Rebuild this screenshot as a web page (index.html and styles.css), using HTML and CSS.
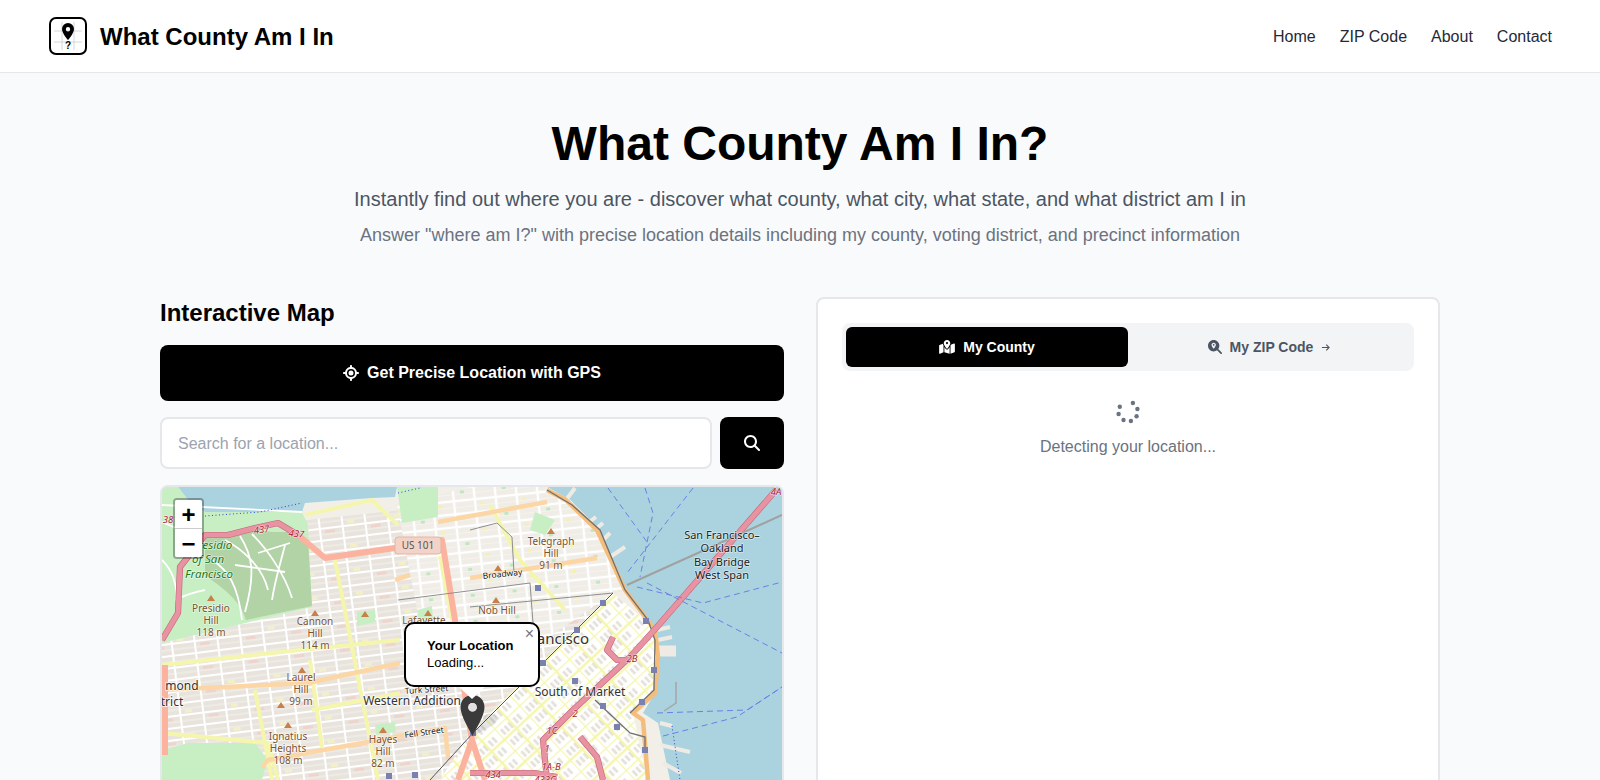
FILE: index.html
```html
<!DOCTYPE html>
<html lang="en">
<head>
    <meta charset="UTF-8">
    <meta name="viewport" content="width=device-width, initial-scale=1.0">
    <title>What County Am I In</title>
    <link rel="stylesheet" href="styles.css">
</head>
<body>
    <header class="site-header">
        <a class="brand" href="#">
            <svg class="brand-logo" viewBox="-1 0 40 40">
                <rect class="logo-frame" x="1" y="1" width="36" height="36" rx="6"/>
                <path class="logo-grid" d="M5 14H33M5 25H33M13 5V33M25 5V33"/>
                <path class="logo-pin" fill-rule="evenodd" d="M19 6a6 6 0 0 0-6 6c0 4.500 6 11 6 11s6-6.500 6-11A6 6 0 0 0 19 6zm0 4a2.200 2.200 0 1 1 0 4.400 2.200 2.200 0 0 1 0-4.400z"/>
                <text class="logo-mark" x="19" y="32">?</text>
            </svg>
            <span class="brand-name">What County Am I In</span>
        </a>
        <nav class="site-nav">
            <a href="#">Home</a>
            <a href="#">ZIP Code</a>
            <a href="#">About</a>
            <a href="#">Contact</a>
        </nav>
    </header>

    <main class="page">
        <section class="hero">
            <h1>What County Am I In?</h1>
            <p class="hero-lead">Instantly find out where you are - discover what county, what city, what state, and what district am I in</p>
            <p class="hero-sub">Answer "where am I?" with precise location details including my county, voting district, and precinct information</p>
        </section>

        <div class="columns">
            <section class="map-column">
                <h2>Interactive Map</h2>
                <button class="gps-button" type="button">
                    <svg class="icon-gps" viewBox="0 0 512 512"><path d="M256 0c17.700 0 32 14.300 32 32V66.700C368.400 80.100 431.900 143.600 445.300 224H480c17.700 0 32 14.300 32 32s-14.300 32-32 32H445.300C431.900 368.400 368.400 431.900 288 445.300V480c0 17.700-14.300 32-32 32s-32-14.300-32-32V445.300C143.600 431.900 80.100 368.400 66.700 288H32c-17.700 0-32-14.300-32-32s14.300-32 32-32H66.700C80.100 143.600 143.600 80.100 224 66.700V32c0-17.700 14.300-32 32-32zM128 256a128 128 0 1 0 256 0 128 128 0 1 0 -256 0zm128-80a80 80 0 1 1 0 160 80 80 0 1 1 0-160z"/></svg>
                    Get Precise Location with GPS
                </button>
                <form class="search-row">
                    <input class="search-input" type="text" placeholder="Search for a location...">
                    <button class="search-button" type="button" aria-label="Search">
                        <svg class="icon-search" viewBox="0 0 512 512"><path d="M416 208c0 45.900-14.900 88.300-40 122.700L502.600 457.400c12.500 12.500 12.500 32.800 0 45.300s-32.800 12.500-45.300 0L330.700 376c-34.400 25.200-76.800 40-122.700 40C93.100 416 0 322.900 0 208S93.100 0 208 0S416 93.100 416 208zM208 352a144 144 0 1 0 0-288 144 144 0 1 0 0 288z"/></svg>
                    </button>
                </form>

                <div class="map">
                    <svg class="map-canvas" viewBox="162 487 620 596">
                        <defs>
                            <pattern id="blocks" width="46" height="24" patternUnits="userSpaceOnUse" patternTransform="rotate(-7)">
                                <rect class="pt-street" width="46" height="24"/>
                                <rect class="pt-block" x="1" y="1" width="21" height="10"/>
                                <rect class="pt-block" x="24" y="1" width="21" height="10"/>
                                <rect class="pt-block" x="1" y="13" width="21" height="10"/>
                                <rect class="pt-block" x="24" y="13" width="21" height="10"/>
                                <path class="pt-alley" d="M1 6H22M24 6H45M1 18H22M24 18H45"/>
                                <rect class="pt-pink" x="28" y="14" width="10" height="3"/>
                                <rect class="pt-pale" x="5" y="7" width="7" height="3"/>
                            </pattern>
                            <pattern id="blocks-light" width="42" height="26" patternUnits="userSpaceOnUse" patternTransform="rotate(-6)">
                                <rect class="pt-street" width="42" height="26"/>
                                <rect class="pt-block-light" x="1.200" y="1.200" width="18.600" height="10.600"/>
                                <rect class="pt-block-light" x="22.200" y="1.200" width="18.600" height="10.600"/>
                                <rect class="pt-block-light" x="1.200" y="14.200" width="18.600" height="10.600"/>
                                <rect class="pt-block-light" x="22.200" y="14.200" width="18.600" height="10.600"/>
                                <path class="pt-alley" d="M1 6.500H20M22 6.500H41M1 19.500H20M22 19.500H41"/>
                                <rect class="pt-yolk" x="5" y="3" width="4" height="3"/>
                                <rect class="pt-green" x="28" y="16" width="4" height="3"/>
                            </pattern>
                            <pattern id="soma" width="34" height="30" patternUnits="userSpaceOnUse" patternTransform="rotate(-43)">
                                <rect class="pt-street" width="34" height="30"/>
                                <path class="pt-stripe" d="M5 5V12M10 5V12M15 5V12M22 5V12M27 5V12M5 19V26M10 19V26M15 19V26M22 19V26M27 19V26"/>
                                <path class="pt-yellow" d="M0 0H34M0 15H34M0 0V30M17 0V30"/>
                            </pattern>
                        </defs>

                        <rect class="water" x="162" y="487" width="620" height="596"/>

                        <path class="land" d="M162 487H178L188 500L205 512L302 512L305 503L372 498L395 497L397 487H547L570 500L597 527L627 590L657 630L658 657L655 693L643 713L658 723L670 780H162Z"/>
                        <path class="pier" d="M585 525L596 517M592 532L603 523M598 545L610 533M610 557L625 547M566 500L575 488M657 630L670 627M658 640L672 637M660 723L672 726M660 745L690 752M663 763L681 773"/>
                        <path class="pier-wide" d="M658 651H676"/>
                        <path class="marina" d="M676 682V703L664 711"/>

                        <path class="blocks" d="M162 535L450 505L470 487H547L570 500L597 527L627 590L613 593L470 733L440 780H162Z"/>
                        <path class="blocks-light" d="M397 505L470 487H547L570 500L597 527L627 590L613 593L545 640L420 625Z"/>
                        <path class="soma" d="M613 593L657 630L658 657L655 693L633 713L647 780H440L470 733Z"/>

                        <path class="park" d="M162 487H178L188 500L205 512L302 512L308 525L312 607L162 643Z"/>
                        <path class="forest" d="M205 538C225 530 250 528 272 532L298 532L308 540L312 606L246 620C240 600 225 590 205 575Z"/>
                        <path class="park-road" d="M225 540C240 548 262 565 268 590M240 536C252 555 256 572 245 612M252 534C268 550 285 575 292 598M212 560C228 570 238 585 242 620M285 545C280 565 275 580 272 600M162 522C180 530 195 535 205 540M162 505L302 512M175 600C185 595 195 592 205 590M162 560C172 570 178 585 176 600M258 553L290 543M235 565L285 572"/>
                        <path class="park" d="M162 750L188 743L255 743L268 760L262 780H162Z"/>
                        <path class="park" d="M397 487H438L438 517L402 523Z"/>
                        <path class="park" d="M535 512L555 520L545 535L530 530Z"/>
                        <path class="park" d="M357 612L375 610L375 622L357 626Z"/>
                        <path class="park" d="M417 610L432 606L433 618L419 622Z"/>
                        <path class="park" d="M375 725L395 722L396 732L376 735Z"/>
                        <path class="coast-dots" d="M205 516L260 512L302 503M398 493L420 488M672 726L680 780"/>

                        <path class="rd-tert" d="M335 560L378 780M440 556L452 620M162 733L268 743L278 780M162 665L300 650L400 640M255 690L272 780M310 660L322 747M312 710L400 693M305 515L372 500L398 525M490 505L520 560L565 610"/>
                        <path class="rd-sec" d="M162 690L308 683L400 663M262 767L268 760L445 728L448 757M438 522L547 502M395 580L410 575M470 578L597 558"/>
                        <path class="rd-trunk" d="M298 535L325 558L395 548L442 540L455 620L465 695L472 740L458 780M472 740L485 780M165 665V755"/>
                        <path class="rd-motor-edge" d="M162 640L178 613L180 567L205 535L228 535L255 528L278 523L298 535"/>
                        <path class="rd-motor" d="M162 640L178 613L180 567L205 535L228 535L255 528L278 523L298 535"/>
                        <path class="rd-embarc" d="M547 490L566 500L597 530L625 590L655 630L658 657L655 693L633 713L643 720L648 780"/>
                        <path class="rail" d="M547 490L572 505L600 530L625 590L648 620L655 640L654 690L630 713"/>
                        <path class="rd-motor-edge" d="M776 490L657 627L630 657L573 710L543 740L547 780M470 773H535L557 777M580 737L597 757L603 780M613 637L607 650L617 660L630 660"/>
                        <path class="rd-motor" d="M776 490L657 627L630 657L573 710L543 740L547 780M470 773H535L557 777M580 737L597 757L603 780M613 637L607 650L617 660L630 660"/>

                        <path class="rail rail-soft" d="M470 530L497 523L512 537L514 573M530 583L533 623M398 600L530 583M470 607L613 593"/>
                        <path class="rail" d="M595 700L630 733L645 737L645 750"/>
                        <path class="rail-thin" d="M613 593L473 733L430 780"/>
                        <path class="bridge-gray" d="M627 585L782 515"/>
                        <path class="ferry" d="M608 488L647 542M645 488L653 513L640 577M693 488L627 573M647 583L782 653M637 587L703 603L782 582M657 713L747 710L782 687M663 736L737 717L782 687"/>

                        <g class="stations">
                            <rect x="535" y="585" width="6" height="6"/>
                            <rect x="600" y="600" width="6" height="6"/>
                            <rect x="643" y="618" width="6" height="6"/>
                            <rect x="574" y="627" width="6" height="6"/>
                            <rect x="540" y="660" width="6" height="6"/>
                            <rect x="572" y="678" width="6" height="6"/>
                            <rect x="651" y="667" width="6" height="6"/>
                            <rect x="639" y="699" width="6" height="6"/>
                            <rect x="600" y="703" width="6" height="6"/>
                            <rect x="614" y="724" width="6" height="6"/>
                            <rect x="642" y="747" width="6" height="6"/>
                            <rect x="470" y="730" width="6" height="6"/>
                            <rect x="386" y="773" width="6" height="6"/>
                            <rect x="412" y="772" width="6" height="6"/>
                        </g>

                        <path class="peak" d="M207 601l4-6 4 6zM311 616l4-6 4 6zM361 617l4-6 4 6zM424 616l4-6 4 6zM298 673l4-6 4 6zM277 708l4-6 4 6zM284 728l4-6 4 6zM379 733l4-6 4 6zM547 534l4-6 4 6zM494 571l4-6 4 6zM492 603l4-6 4 6z"/>

                        <g class="lbl-peak">
                            <text x="211" y="612">Presidio</text>
                            <text x="211" y="624">Hill</text>
                            <text x="211" y="636">118 m</text>
                            <text x="315" y="625">Cannon</text>
                            <text x="315" y="637">Hill</text>
                            <text x="315" y="649">114 m</text>
                            <text x="301" y="681">Laurel</text>
                            <text x="301" y="693">Hill</text>
                            <text x="301" y="705">99 m</text>
                            <text x="288" y="740">Ignatius</text>
                            <text x="288" y="752">Heights</text>
                            <text x="288" y="764">108 m</text>
                            <text x="383" y="743">Hayes</text>
                            <text x="383" y="755">Hill</text>
                            <text x="383" y="767">82 m</text>
                            <text x="424" y="624">Lafayette</text>
                            <text x="551" y="545">Telegraph</text>
                            <text x="551" y="557">Hill</text>
                            <text x="551" y="569">91 m</text>
                            <text x="497" y="614">Nob Hill</text>
                        </g>

                        <g class="lbl-park">
                            <text x="212" y="549">Presidio</text>
                            <text x="208" y="563">of San</text>
                            <text x="209" y="578">Francisco</text>
                        </g>

                        <g class="lbl-place">
                            <text x="182" y="690">mond</text>
                            <text x="172" y="706">trict</text>
                            <text x="412" y="705">Western Addition</text>
                            <text x="580" y="696">South of Market</text>
                        </g>
                        <text class="lbl-city" x="589" y="644">San Francisco</text>

                        <g class="lbl-bridge">
                            <text x="722" y="539">San Francisco–</text>
                            <text x="722" y="552">Oakland</text>
                            <text x="722" y="566">Bay Bridge</text>
                            <text x="722" y="579">West Span</text>
                        </g>

                        <text class="lbl-street" x="483" y="579" transform="rotate(-6 483 579)">Broadway</text>
                        <text class="lbl-street" x="405" y="694" transform="rotate(-4 405 694)">Turk Street</text>
                        <text class="lbl-street" x="405" y="738" transform="rotate(-8 405 738)">Fell Street</text>

                        <g class="lbl-exit">
                            <text x="168" y="523">38</text>
                            <text x="262" y="533" transform="rotate(-8 262 533)">437</text>
                            <text x="296" y="537" transform="rotate(6 296 537)">437</text>
                            <text x="632" y="662">2B</text>
                            <text x="575" y="717">2</text>
                            <text x="552" y="734">1C</text>
                            <text x="547" y="752">1</text>
                            <text x="551" y="770">1A-B</text>
                            <text x="493" y="778">434</text>
                            <text x="545" y="783">433C</text>
                            <text x="776" y="495">4A</text>
                        </g>

                        <rect class="shield" x="395" y="537" width="46" height="17" rx="3"/>
                        <text class="shield-text" x="418" y="549">US 101</text>

                        <path class="marker-shadow" d="M472 737L495 724C500 718 495 712 486 714Z"/>
                        <path class="marker" fill-rule="evenodd" d="M472.500 695C465.500 695 460.500 700.500 460.500 707C460.500 716 469 729 472.500 736C476 729 484.500 716 484.500 707C484.500 700.500 479.500 695 472.500 695ZM472.500 703A4.300 4.300 0 1 1 472.500 711.600A4.300 4.300 0 1 1 472.500 703Z"/>
                        <circle class="marker-eye" cx="472.500" cy="707.300" r="4.300"/>
                    </svg>

                    <div class="zoom-control">
                        <a class="zoom-in" href="#">+</a>
                        <a class="zoom-out" href="#">−</a>
                    </div>

                    <div class="popup">
                        <a class="popup-close" href="#">×</a>
                        <div class="popup-body">
                            <strong>Your Location</strong><br>
                            Loading...
                        </div>
                        <div class="popup-tip"></div>
                    </div>
                </div>
            </section>

            <section class="result-card">
                <div class="tabs">
                    <button class="tab tab-active" type="button">
                        <svg class="icon-map" viewBox="0 0 576 512"><path d="M408 120c0 54.600-73.100 151.900-105.200 192c-7.700 9.600-22 9.600-29.600 0C241.100 271.900 168 174.600 168 120C168 53.700 221.700 0 288 0s120 53.700 120 120zm8 80.400c3.500-6.900 6.700-13.800 9.600-20.600c.5-1.200 1-2.500 1.500-3.700l116-46.400C558.900 123.400 576 135 576 152V422.800c0 9.800-6 18.600-15.100 22.300L416 503V200.400zM137.600 138.300c2.400 14.100 7.200 28.300 12.800 41.500c2.900 6.800 6.100 13.700 9.600 20.600V451.800L32.900 502.700C17.100 509 0 497.400 0 480V209.200c0-9.800 6-18.600 15.100-22.300l122.600-49zM327.800 332c13.900-17.400 35.700-45.700 56.200-77V504.300L192 449.400V255c20.500 31.300 42.300 59.600 56.200 77c20.500 25.600 59.100 25.600 79.600 0zM288 152a40 40 0 1 0 0-80 40 40 0 1 0 0 80z"/></svg>
                        My County
                    </button>
                    <button class="tab" type="button">
                        <svg class="icon-zip" viewBox="0 0 512 512"><path d="M416 208c0 45.900-14.900 88.300-40 122.700L502.600 457.400c12.500 12.500 12.500 32.800 0 45.300s-32.800 12.500-45.300 0L330.700 376c-34.400 25.200-76.800 40-122.700 40C93.100 416 0 322.900 0 208S93.100 0 208 0S416 93.100 416 208zM288 176c0-44.200-35.800-80-80-80s-80 35.800-80 80c0 48.800 46.500 111.600 68.600 138.600c6 7.300 16.800 7.300 22.700 0c22.100-27 68.600-89.800 68.600-138.600zm-112 0a32 32 0 1 1 64 0 32 32 0 1 1 -64 0z"/></svg>
                        My ZIP Code
                        <svg class="icon-arrow" viewBox="0 0 10 10"><path d="M1 5H9M5.800 1.800L9 5L5.800 8.200"/></svg>
                    </button>
                </div>

                <div class="detecting">
                    <svg class="spinner" viewBox="-12 -12 24 24">
                        <circle cx="4.900" cy="-9" r="2.200"/>
                        <circle cx="9.400" cy="-3" r="2.200"/>
                        <circle cx="8.600" cy="4.300" r="2.200"/>
                        <circle cx="2.900" cy="9" r="2.200"/>
                        <circle cx="-4.500" cy="8" r="2.200"/>
                        <circle cx="-9.400" cy="2" r="2.200"/>
                        <circle cx="-8.200" cy="-5.300" r="2.200"/>
                    </svg>
                    <p>Detecting your location...</p>
                </div>
            </section>
        </div>
    </main>
</body>
</html>
```

FILE: styles.css
```css
html, body {
    margin: 0;
    height: 100%;
    overflow: hidden;
}
body {
    font-family: "Liberation Sans", Arial, sans-serif;
    background-color: #f9fafb;
    color: #000;
}
a {
    color: inherit;
    text-decoration: none;
}
h1, h2, p {
    margin: 0;
}
button {
    font-family: inherit;
    border: none;
    cursor: pointer;
}

/* header */
.site-header {
    box-sizing: border-box;
    height: 73px;
    padding: 1px 48px 0;
    display: flex;
    align-items: center;
    justify-content: space-between;
    background-color: #fff;
    border-bottom: 1px solid #e5e7eb;
}
.brand {
    display: flex;
    align-items: center;
    gap: 12px;
}
.brand-logo {
    width: 40px;
    height: 40px;
}
.logo-frame {
    fill: #fff;
    stroke: #000;
    stroke-width: 2;
}
.logo-grid {
    fill: none;
    stroke: #c9cdd3;
    stroke-width: 0.8;
}
.logo-pin {
    fill: #000;
}
.logo-mark {
    font-size: 10px;
    font-weight: 700;
    text-anchor: middle;
    fill: #000;
}
.brand-name {
    font-size: 24px;
    font-weight: 700;
}
.site-nav {
    display: flex;
    gap: 24px;
    font-size: 16px;
    color: #1f2937;
}

/* hero */
.page {
    width: 1280px;
    margin: 0 auto;
    padding-top: 47px;
}
.hero {
    text-align: center;
    margin-bottom: 48px;
}
.hero h1 {
    font-size: 48px;
    line-height: 48px;
    font-weight: 700;
    margin-bottom: 17px;
}
.hero-lead {
    font-size: 20px;
    line-height: 28px;
    color: #4b5563;
    margin-bottom: 8px;
}
.hero-sub {
    font-size: 18px;
    line-height: 28px;
    color: #6b7280;
}

.columns {
    display: grid;
    grid-template-columns: 1fr 1fr;
    gap: 32px;
}

/* left column */
.map-column h2 {
    font-size: 24px;
    line-height: 32px;
    font-weight: 700;
    margin-bottom: 16px;
}
.gps-button {
    width: 100%;
    height: 56px;
    padding-top: 1px;
    display: flex;
    align-items: center;
    justify-content: center;
    gap: 8px;
    background-color: #000;
    color: #fff;
    font-size: 16px;
    font-weight: 700;
    border-radius: 8px;
    margin-bottom: 16px;
}
.icon-gps {
    width: 16px;
    height: 16px;
    fill: #fff;
}
.search-row {
    display: flex;
    gap: 8px;
    margin-bottom: 16px;
}
.search-input {
    flex: 1;
    box-sizing: border-box;
    height: 52px;
    padding: 1px 16px 0;
    font-family: inherit;
    font-size: 16px;
    background-color: #fff;
    border: 2px solid #e5e7eb;
    border-radius: 8px;
    outline: none;
}
.search-input::placeholder {
    color: #9ca3af;
}
.search-button {
    width: 64px;
    height: 52px;
    background-color: #000;
    border-radius: 8px;
    display: flex;
    align-items: center;
    justify-content: center;
}
.icon-search {
    width: 16px;
    height: 16px;
    fill: #fff;
}

/* map */
.map {
    position: relative;
    height: 600px;
    border: 2px solid #e5e7eb;
    border-radius: 8px;
    overflow: hidden;
    background-color: #aad3df;
}
.map-canvas {
    display: block;
    width: 620px;
    height: 596px;
}
.map-canvas text {
    font-family: "Noto Sans", sans-serif;
    paint-order: stroke;
    stroke-linejoin: round;
}
.pt-street { fill: #fff; }
.pt-block { fill: #e8e4dd; }
.pt-block-light { fill: #f0ede7; }
.pt-alley { fill: none; stroke: #f7f5f1; stroke-width: 0.800; }
.pt-pink { fill: #efd3cd; }
.pt-pale { fill: #f3f0c8; }
.pt-yolk { fill: #f5f1b0; }
.pt-green { fill: #bfe8c0; }
.pt-stripe { fill: none; stroke: #e4e0d9; stroke-width: 2.600; }
.pt-yellow { fill: none; stroke: #f5f6ae; stroke-width: 2.400; }
.water { fill: #aad3df; }
.land { fill: #f2efe9; }
.blocks { fill: url(#blocks); }
.blocks-light { fill: url(#blocks-light); }
.soma { fill: url(#soma); }
.park { fill: #c8efc4; }
.forest { fill: #b1d3a6; }
.park-road { fill: none; stroke: #fff; stroke-width: 1.800; }
.coast-dots { fill: none; stroke: #2a3fe0; stroke-width: 1; stroke-dasharray: 1 2.500; }
.pier { fill: none; stroke: #efebe4; stroke-width: 4; }
.pier-wide { fill: none; stroke: #efebe4; stroke-width: 11; }
.marina { fill: none; stroke: #a6a6a6; stroke-width: 1.500; }
.rd-tert { fill: none; stroke: #f5f6ae; stroke-width: 4; stroke-linejoin: round; }
.rd-sec { fill: none; stroke: #fcd6a4; stroke-width: 4.500; stroke-linejoin: round; }
.rd-trunk { fill: none; stroke: #fbb29e; stroke-width: 6; stroke-linejoin: round; }
.rd-motor { fill: none; stroke: #e892a2; stroke-width: 5; stroke-linejoin: round; }
.rd-motor-edge { fill: none; stroke: #c0687c; stroke-width: 6.200; stroke-linejoin: round; }
.rd-embarc { fill: none; stroke: #f5bd7b; stroke-width: 4.500; stroke-linejoin: round; }
.rail { fill: none; stroke: #707070; stroke-width: 1.300; }
.rail-soft { stroke: #8e8e8e; stroke-width: 1; }
.rail-thin { fill: none; stroke: #555; stroke-width: 1; }
.bridge-gray { fill: none; stroke: #a0a0a0; stroke-width: 2; }
.ferry { fill: none; stroke: #6b80e6; stroke-width: 1; stroke-dasharray: 6 4; }
.stations { fill: #7981b0; }
.peak { fill: #c87f4c; }
.lbl-peak text {
    font-size: 10px;
    text-anchor: middle;
    fill: #7a5230;
    stroke: rgba(255, 255, 255, 0.6);
    stroke-width: 1.500;
}
.lbl-park text {
    font-size: 11.500px;
    font-style: italic;
    text-anchor: middle;
    fill: #1c7a1c;
    stroke: rgba(255, 255, 255, 0.6);
    stroke-width: 1.500;
}
.lbl-place text {
    font-size: 12px;
    text-anchor: middle;
    fill: #333;
    stroke: rgba(255, 255, 255, 0.7);
    stroke-width: 2;
}
.lbl-city {
    font-size: 15px;
    text-anchor: end;
    fill: #333;
    stroke: rgba(255, 255, 255, 0.7);
    stroke-width: 2;
}
.lbl-bridge text {
    font-size: 11px;
    text-anchor: middle;
    fill: #222;
    stroke: rgba(255, 255, 255, 0.5);
    stroke-width: 1.500;
}
.lbl-street {
    font-size: 8.500px;
    fill: #222;
    stroke: rgba(255, 255, 255, 0.8);
    stroke-width: 1.500;
}
.lbl-exit text {
    font-size: 9.500px;
    font-style: italic;
    text-anchor: middle;
    fill: #a51e36;
    stroke: rgba(255, 255, 255, 0.6);
    stroke-width: 1.200;
}
.shield { fill: #f3d3c8; stroke: #e3b5a5; stroke-width: 1; }
.shield-text {
    font-size: 10px;
    text-anchor: middle;
    fill: #555;
}
.marker { fill: #3a3a3a; }
.marker-eye { fill: #e2e2e2; }
.marker-shadow { fill: rgba(0, 0, 0, 0.1); }

.zoom-control {
    position: absolute;
    top: 11px;
    left: 11px;
    width: 27px;
    display: flex;
    flex-direction: column;
    border: 2px solid rgba(0, 0, 0, 0.3);
    border-radius: 4px;
    background-clip: padding-box;
    overflow: hidden;
}
.zoom-control a {
    height: 26px;
    padding-top: 2px;
    display: flex;
    align-items: center;
    justify-content: center;
    background-color: #fff;
    font-size: 24px;
    font-weight: 700;
    line-height: 1;
}
.zoom-in {
    border-bottom: 1px solid #ccc;
}
.popup {
    position: absolute;
    left: 242px;
    top: 135px;
    box-sizing: border-box;
    width: 136px;
    height: 65px;
    background-color: #fff;
    border: 2px solid #000;
    border-radius: 10px;
    padding: 13px 21px;
    font-size: 13px;
    line-height: 17px;
}
.popup-close {
    position: absolute;
    top: 2px;
    right: 4px;
    font-size: 16px;
    line-height: 16px;
    color: #757575;
}
.popup-tip {
    position: absolute;
    left: 53px;
    top: 63px;
    width: 0;
    height: 0;
    border-left: 13px solid transparent;
    border-right: 13px solid transparent;
    border-top: 12px solid #fff;
}

/* right column */
.result-card {
    box-sizing: border-box;
    height: 700px;
    padding: 24px;
    background-color: #fff;
    border: 2px solid #e5e7eb;
    border-radius: 8px;
}
.tabs {
    display: flex;
    padding: 4px;
    background-color: #f3f4f6;
    border-radius: 8px;
}
.tab {
    flex: 1;
    height: 40px;
    display: flex;
    align-items: center;
    justify-content: center;
    gap: 8px;
    background: none;
    color: #4b5563;
    font-size: 14px;
    font-weight: 700;
    border-radius: 6px;
}
.tab-active {
    background-color: #000;
    color: #fff;
}
.icon-map {
    width: 16px;
    height: 14px;
    fill: #fff;
}
.icon-zip {
    width: 14px;
    height: 14px;
    fill: #4b5563;
}
.icon-arrow {
    width: 9px;
    height: 9px;
    fill: none;
    stroke: #4b5563;
    stroke-width: 1.200;
}
.detecting {
    padding-top: 29px;
    text-align: center;
    color: #6b7280;
}
.spinner {
    display: block;
    width: 24px;
    height: 24px;
    margin: 0 auto 11px;
    fill: #6b7280;
}
.detecting p {
    font-size: 16px;
    line-height: 24px;
}
```
